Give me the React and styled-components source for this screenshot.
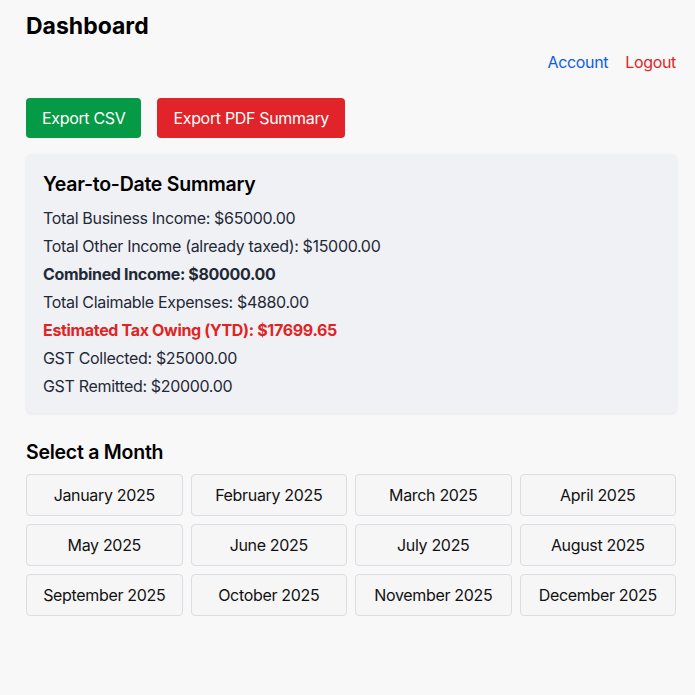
import React from "react";
import styled, { createGlobalStyle } from "styled-components";

const Global = createGlobalStyle`
  html, body { margin: 0; padding: 0; background: #f8f8f9; }
  body { font-family: Inter, "Noto Sans", sans-serif; color: #111; letter-spacing: -0.33px; }
`;

const Page = styled.div`
  width: 651px;
  padding: 12px 0 40px 26px;
`;

const Title = styled.h1`
  margin: 0;
  font-size: 23px;
  font-weight: 700;
  line-height: 28px;
  color: #000;
  letter-spacing: 0;
`;

const Nav = styled.div`
  display: flex;
  justify-content: flex-end;
  gap: 17px;
  margin-top: 12px;
  padding-right: 1px;
`;

const NavLink = styled.a`
  font-size: 16px;
  line-height: 20px;
  color: ${(p) => p.$color};
  text-decoration: none;
`;

const Actions = styled.div`
  display: flex;
  gap: 16px;
  margin-top: 26px;
`;

const ActionButton = styled.button`
  height: 40px;
  padding: 0 16px;
  border: none;
  border-radius: 4px;
  background: ${(p) => p.$bg};
  color: #fff;
  font-family: inherit;
  font-size: 16px;
  letter-spacing: -0.33px;
`;

const Card = styled.section`
  margin-top: 16px;
  background: #f0f1f5;
  border-radius: 6px;
  box-shadow: 0 1px 3px rgba(0, 0, 0, 0.08);
  padding: 18px 17px 13px;
`;

const CardTitle = styled.h2`
  margin: 0 0 8px;
  font-size: 19.5px;
  font-weight: 600;
  line-height: 24px;
  color: #000;
  letter-spacing: -0.25px;
`;

const Line = styled.div`
  font-size: 16px;
  line-height: 28px;
  color: ${(p) => (p.$red ? "#e02424" : "#1f2937")};
  font-weight: ${(p) => (p.$bold ? 700 : 400)};
`;

const SectionTitle = styled.h2`
  margin: 27px 0 10px;
  font-size: 19.5px;
  font-weight: 600;
  line-height: 24px;
  color: #000;
  letter-spacing: -0.25px;
`;

const Grid = styled.div`
  display: grid;
  grid-template-columns: repeat(4, 1fr);
  gap: 8px;
  width: 650px;
`;

const MonthButton = styled.button`
  height: 42px;
  background: #f6f6f7;
  border: 1px solid #dcdce2;
  border-radius: 4px;
  font-family: inherit;
  font-size: 16px;
  letter-spacing: -0.33px;
  color: #111;
`;

const months = [
  "January", "February", "March", "April", "May", "June",
  "July", "August", "September", "October", "November", "December",
];

export default function App() {
  return (
    <>
      <Global />
      <Page>
        <Title>Dashboard</Title>
        <Nav>
          <NavLink $color="#0b5ee8" href="#">Account</NavLink>
          <NavLink $color="#e02424" href="#">Logout</NavLink>
        </Nav>
        <Actions>
          <ActionButton $bg="#059a45">Export CSV</ActionButton>
          <ActionButton $bg="#e02429">Export PDF Summary</ActionButton>
        </Actions>
        <Card>
          <CardTitle>Year-to-Date Summary</CardTitle>
          <Line>Total Business Income: $65000.00</Line>
          <Line>Total Other Income (already taxed): $15000.00</Line>
          <Line $bold>Combined Income: $80000.00</Line>
          <Line>Total Claimable Expenses: $4880.00</Line>
          <Line $bold $red>Estimated Tax Owing (YTD): $17699.65</Line>
          <Line>GST Collected: $25000.00</Line>
          <Line>GST Remitted: $20000.00</Line>
        </Card>
        <SectionTitle>Select a Month</SectionTitle>
        <Grid>
          {months.map((m) => (
            <MonthButton key={m}>{m} 2025</MonthButton>
          ))}
        </Grid>
      </Page>
    </>
  );
}
